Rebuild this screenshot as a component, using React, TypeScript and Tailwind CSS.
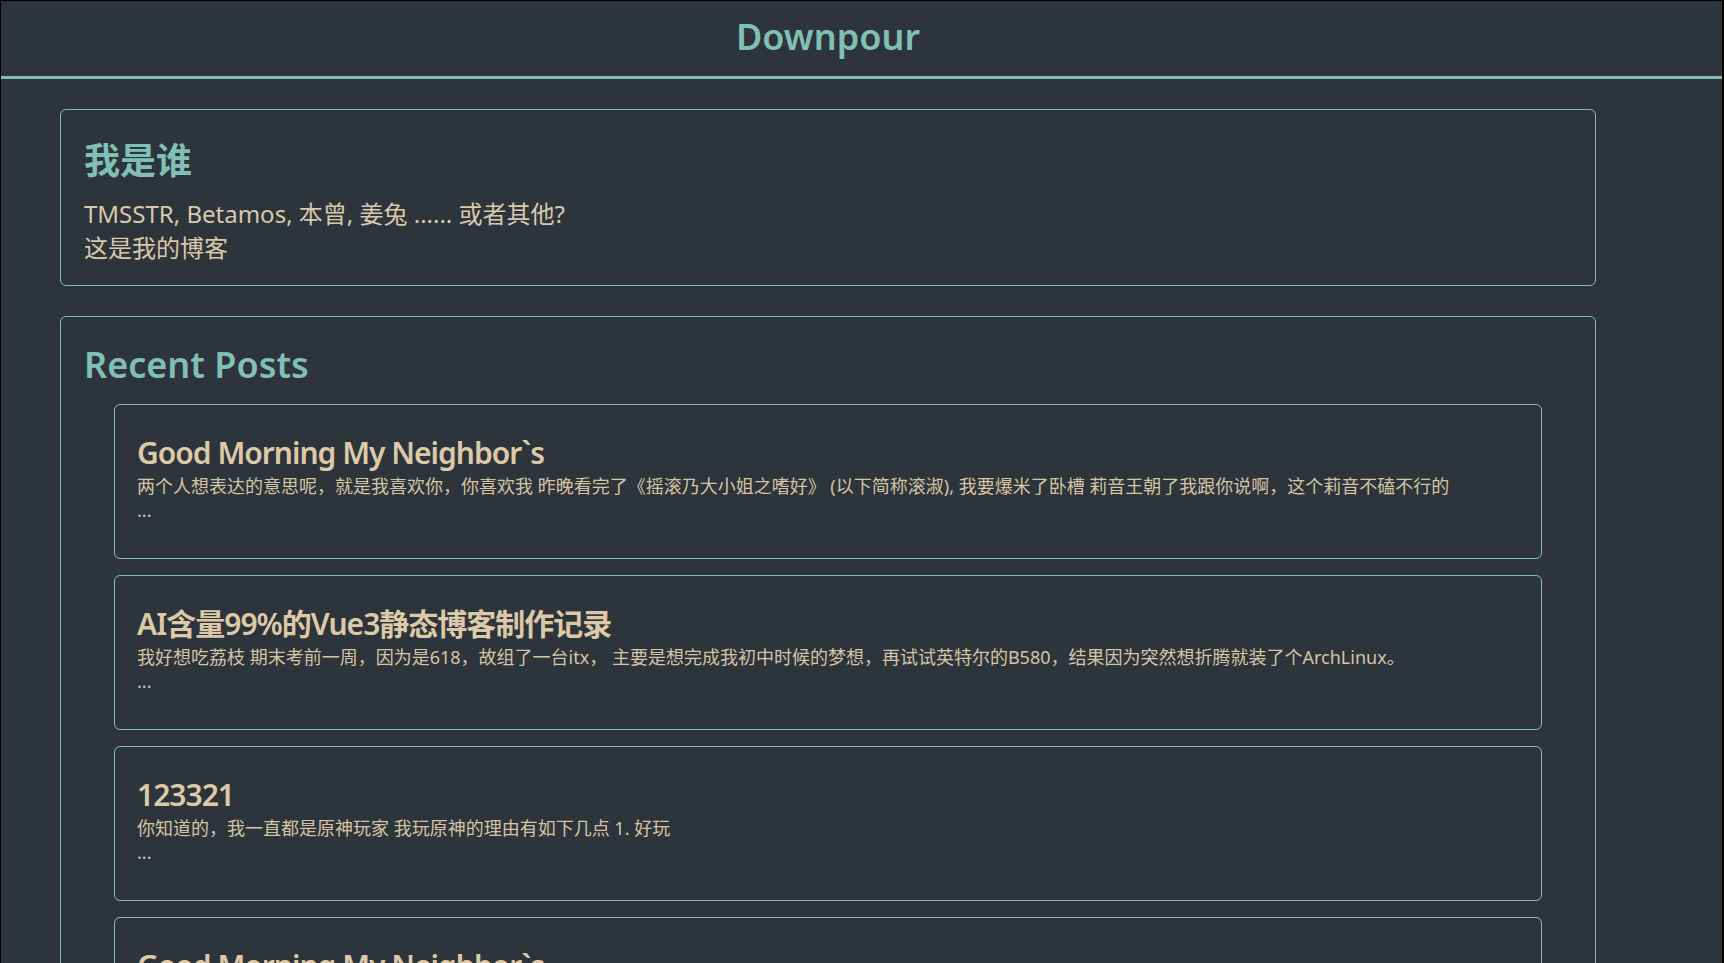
import React from "react";

const posts = [
  {
    title: "Good Morning My Neighbor`s",
    excerpt:
      "两个人想表达的意思呢，就是我喜欢你，你喜欢我 昨晚看完了《摇滚乃大小姐之嗜好》 (以下简称滚淑), 我要爆米了卧槽 莉音王朝了我跟你说啊，这个莉音不磕不行的",
  },
  {
    title: "AI含量99%的Vue3静态博客制作记录",
    excerpt:
      "我好想吃荔枝 期末考前一周，因为是618，故组了一台itx， 主要是想完成我初中时候的梦想，再试试英特尔的B580，结果因为突然想折腾就装了个ArchLinux。",
  },
  {
    title: "123321",
    excerpt: "你知道的，我一直都是原神玩家 我玩原神的理由有如下几点 1. 好玩",
  },
  {
    title: "Good Morning My Neighbor`s",
    excerpt:
      "两个人想表达的意思呢，就是我喜欢你，你喜欢我 昨晚看完了《摇滚乃大小姐之嗜好》 (以下简称滚淑), 我要爆米了卧槽 莉音王朝了我跟你说啊，这个莉音不磕不行的",
  },
];

export default function App() {
  return (
    <div className="min-h-screen bg-[#2e343b] border-t border-l border-r-2 border-black font-['Noto_Sans','Noto_Sans_CJK_SC',sans-serif]">
      <header className="h-[78px] border-b-[3px] border-[#80bfb4]">
        <div className="ml-[59px] w-[1536px] h-full flex items-center justify-center pb-[3px]">
          <h1 className="text-[36px] font-semibold leading-none text-[#80bfb4]">
            Downpour
          </h1>
        </div>
      </header>

      <main className="pl-[59px] pt-[30px] pb-[40px] flex flex-col gap-[30px]">
        <section className="w-[1536px] border border-[#80bfb4] rounded-[6px] px-[23px] pt-[29px] pb-[20px]">
          <h2 className="text-[36px] font-bold leading-[44px] text-[#80bfb4]">
            我是谁
          </h2>
          <p className="mt-[14px] text-[24px] leading-[34px] text-[#d9c8a9]">
            TMSSTR, Betamos, 本曾, 姜兔 ...... 或者其他?
            <br />
            这是我的博客
          </p>
        </section>

        <section className="w-[1536px] border border-[#80bfb4] rounded-[6px] px-[23px] pt-[26px] pb-[30px]">
          <h2 className="text-[36px] font-semibold leading-[44px] text-[#80bfb4]">
            Recent Posts
          </h2>
          <div className="mt-[17px] mx-[30px] flex flex-col gap-[16px]">
            {posts.map((p, i) => (
              <article
                key={i}
                className="border border-[#80bfb4] rounded-[6px] px-[22px] pt-[30px] pb-[36px]"
              >
                <h3 className="text-[30px] font-semibold leading-[36px] tracking-[-1px] text-[#dcc9a7]">
                  {p.title}
                </h3>
                <p className="mt-[3px] text-[18px] leading-[24px] text-[#d5c4a3]">
                  {p.excerpt}
                  <br />
                  ...
                </p>
              </article>
            ))}
          </div>
        </section>
      </main>
    </div>
  );
}
